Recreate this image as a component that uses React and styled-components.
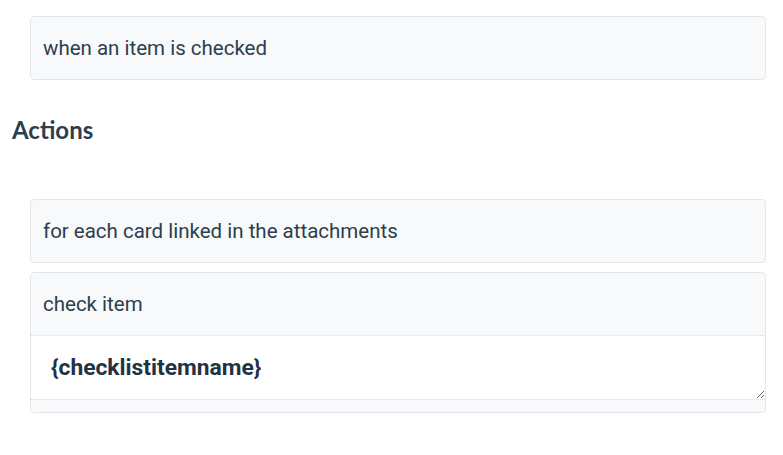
import React from "react";
import styled, { createGlobalStyle } from "styled-components";

const Global = createGlobalStyle`
  body {
    margin: 0;
    background: #ffffff;
    font-family: Roboto, "Liberation Sans", sans-serif;
    color: #2c3e4f;
  }
`;

const App = () => {
  return (
    <Page>
      <Global />
      <Card>
        <Label>when an item is checked</Label>
      </Card>

      <Heading>Actions</Heading>

      <CardList>
        <Card>
          <Label>for each card linked in the attachments</Label>
        </Card>
        <Card>
          <Label>check item</Label>
          <Field defaultValue="{checklistitemname}" />
          <Footer />
        </Card>
      </CardList>
    </Page>
  );
};

const Page = styled.div`
  padding: 16px 17px 0 12px;
  display: flex;
  flex-direction: column;
`;

const Card = styled.div`
  margin-left: 18px;
  display: flex;
  flex-direction: column;
  background: #f8f9fa;
  border: 1px solid #e3e5e8;
  border-radius: 4px;
  overflow: hidden;
`;

const Label = styled.div`
  height: 62px;
  display: flex;
  align-items: center;
  padding: 0 12px;
  font-size: 20.5px;
  color: #2c3e4f;
`;

const Heading = styled.h2`
  margin: 35px 0 0;
  font-family: Lato, "Open Sans", sans-serif;
  font-weight: 700;
  font-size: 24px;
  color: #2c3e4f;
  line-height: 30px;
`;

const CardList = styled.div`
  margin-top: 54px;
  display: flex;
  flex-direction: column;
  gap: 9px;
`;

const Field = styled.textarea`
  display: block;
  box-sizing: border-box;
  height: 65px;
  margin: 0;
  padding: 18px 20px 16px;
  border: none;
  border-top: 1px dotted #d4d7db;
  border-bottom: 1px dotted #d4d7db;
  background: #ffffff;
  font-family: Roboto, "Liberation Sans", sans-serif;
  font-size: 22.8px;
  font-weight: 700;
  color: #1f3342;
  resize: vertical;
  outline: none;
  overflow: hidden;
`;

const Footer = styled.div`
  height: 12px;
  background: #f8f9fa;
`;

export default App;
